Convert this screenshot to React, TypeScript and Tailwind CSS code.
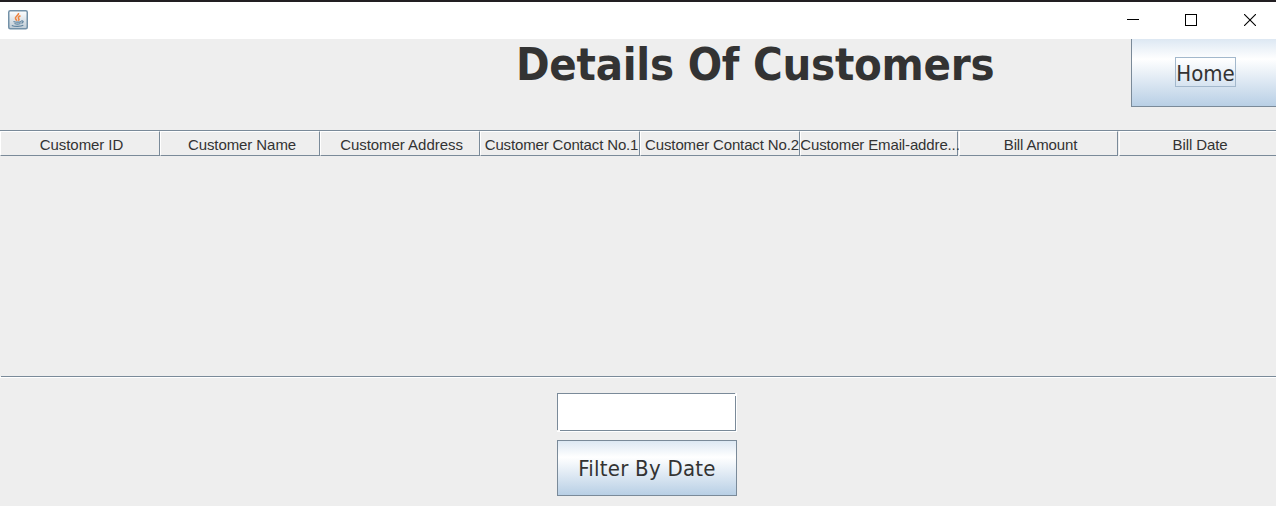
import React from "react";

const columns = [
  { label: "Customer ID", width: "w-[160px]", pad: "pl-[3px] tracking-[-0.08px]" },
  { label: "Customer Name", width: "w-[160px]", pad: "pl-[4px] tracking-[-0.08px]" },
  { label: "Customer Address", width: "w-[160px]", pad: "pl-[3px] tracking-[-0.04px]" },
  { label: "Customer Contact No.1", width: "w-[160px]", pad: "pl-[3px] tracking-[-0.15px]" },
  { label: "Customer Contact No.2", width: "w-[160px]", pad: "pl-[4px] tracking-[-0.14px]" },
  { label: "Customer Email-addre...", width: "w-[158px] mr-px", pad: "pl-[2px] tracking-[-0.14px]" },
  { label: "Bill Amount", width: "w-[159px] mr-px", pad: "pl-[4px] tracking-[-0.15px]" },
  { label: "Bill Date", width: "w-[160px]", pad: "pl-[2px] tracking-[-0.1px]" },
];

function JavaIcon() {
  return (
    <svg width="20" height="20" viewBox="0 0 20 20" fill="none">
      <defs>
        <linearGradient id="tile" x1="0" y1="0" x2="0" y2="1">
          <stop offset="0" stopColor="#ffffff" />
          <stop offset="1" stopColor="#bccad5" />
        </linearGradient>
      </defs>
      <rect x="0.75" y="0.75" width="18.5" height="18" rx="1.5" fill="url(#tile)" stroke="#7391a8" strokeWidth="1.5" />
      <path d="M10.500 3c.8 2.400-4 3.200-3 5.500.3.900 1 1.300 1.400 2.200M12.500 5.800c-2.200.9-2.700 2-1.700 3 .6.7.2 1.300-.5 2" stroke="#ee8440" strokeWidth="1.600" />
      <path d="M5.500 11.500c1.500.9 6 .8 7.700.1M6.500 13.500c1.700.7 4.300.7 6 0M13.300 11c2.400-.6 2.400 1.500.2 2.400M3.800 15.500c2.800 1.300 9 1.200 11.500-.2" stroke="#5f839e" strokeWidth="1.300" />
    </svg>
  );
}

function TitleBar() {
  return (
    <header className="flex h-[39px] items-start justify-between border-t-2 border-[#221f22] bg-white">
      <div className="pl-2 pt-2">
        <JavaIcon />
      </div>
      <div className="flex pt-3 pr-5">
        <svg className="mr-[46px]" width="12" height="12" shapeRendering="crispEdges">
          <path d="M0 5.500h12" stroke="#000" />
        </svg>
        <svg className="mr-[47px]" width="12" height="12" shapeRendering="crispEdges">
          <rect x="0.500" y="0.500" width="11" height="11" fill="none" stroke="#000" />
        </svg>
        <svg width="12" height="12">
          <path d="M0 0l12 12M12 0L0 12" stroke="#000" strokeWidth="1.100" />
        </svg>
      </div>
    </header>
  );
}

export default function App() {
  return (
    <div className="flex h-[506px] w-[1276px] flex-col overflow-hidden bg-[#eeeeee] font-['Liberation_Sans',Arial,sans-serif] text-[#333333]">
      <TitleBar />
      <section className="flex h-[91px] shrink-0 items-start justify-between">
        <h1 className="ml-[516px] h-[52px] whitespace-nowrap font-['DejaVu_Sans_Condensed','DejaVu_Sans',sans-serif] text-[45px] leading-[52px] font-bold tracking-[-0.25px] [clip-path:inset(0_0_10px_0)] [font-stretch:condensed]">
          Details Of Customers
        </h1>
        <button className="flex h-[68px] w-[145px] shrink-0 items-start border-b border-l border-[#7a8a99] bg-linear-to-b from-[#dde8f3] via-white via-30% to-[#b8cfe5] pt-[18px] pl-[43px] font-['DejaVu_Sans_Condensed','DejaVu_Sans',sans-serif] text-[22px] [font-stretch:condensed]">
          <span className="flex h-[30px] w-[61px] items-center justify-center border border-[#a3b8cc] pt-[4px] leading-[30px]">Home</span>
        </button>
      </section>
      <section className="h-[247px] shrink-0 overflow-hidden">
        <div className="flex h-[26px] w-[1279px] border-t border-[#7a8a99]">
          {columns.map((c) => (
            <div
              key={c.label}
              className={`flex h-[25px] shrink-0 justify-center whitespace-nowrap border-t border-r border-b border-l border-t-white border-r-[#7a8a99] border-b-[#7a8a99] border-l-white text-[15px] leading-[25px] ${c.width} ${c.pad}`}
            >
              {c.label}
            </div>
          ))}
        </div>
        <div className="ml-px h-[220px]" />
        <div className="ml-px h-px bg-[#7a8a99]" />
      </section>
      <footer className="flex flex-1 flex-col items-start border-t border-white pl-[557px] pt-[15px]">
        <div className="relative h-[39px] w-[180px] border-r border-b border-white">
          <input className="block h-[38px] w-[179px] border border-[#7a8a99] bg-white px-1 text-[15px] outline-none" />
          <span className="absolute top-0 right-0 h-[3px] w-px border-t border-[#eeeeee] bg-white" />
          <span className="absolute bottom-0 left-0 h-px w-[3px] border-l border-[#eeeeee] bg-white" />
        </div>
        <button className="mt-2 h-14 w-[180px] border border-[#7a8a99] bg-linear-to-b from-[#dde8f3] via-white via-30% to-[#b8cfe5] font-['DejaVu_Sans_Condensed','DejaVu_Sans',sans-serif] text-[22px] tracking-[0.25px] [font-stretch:condensed]">
          Filter By Date
        </button>
      </footer>
    </div>
  );
}
